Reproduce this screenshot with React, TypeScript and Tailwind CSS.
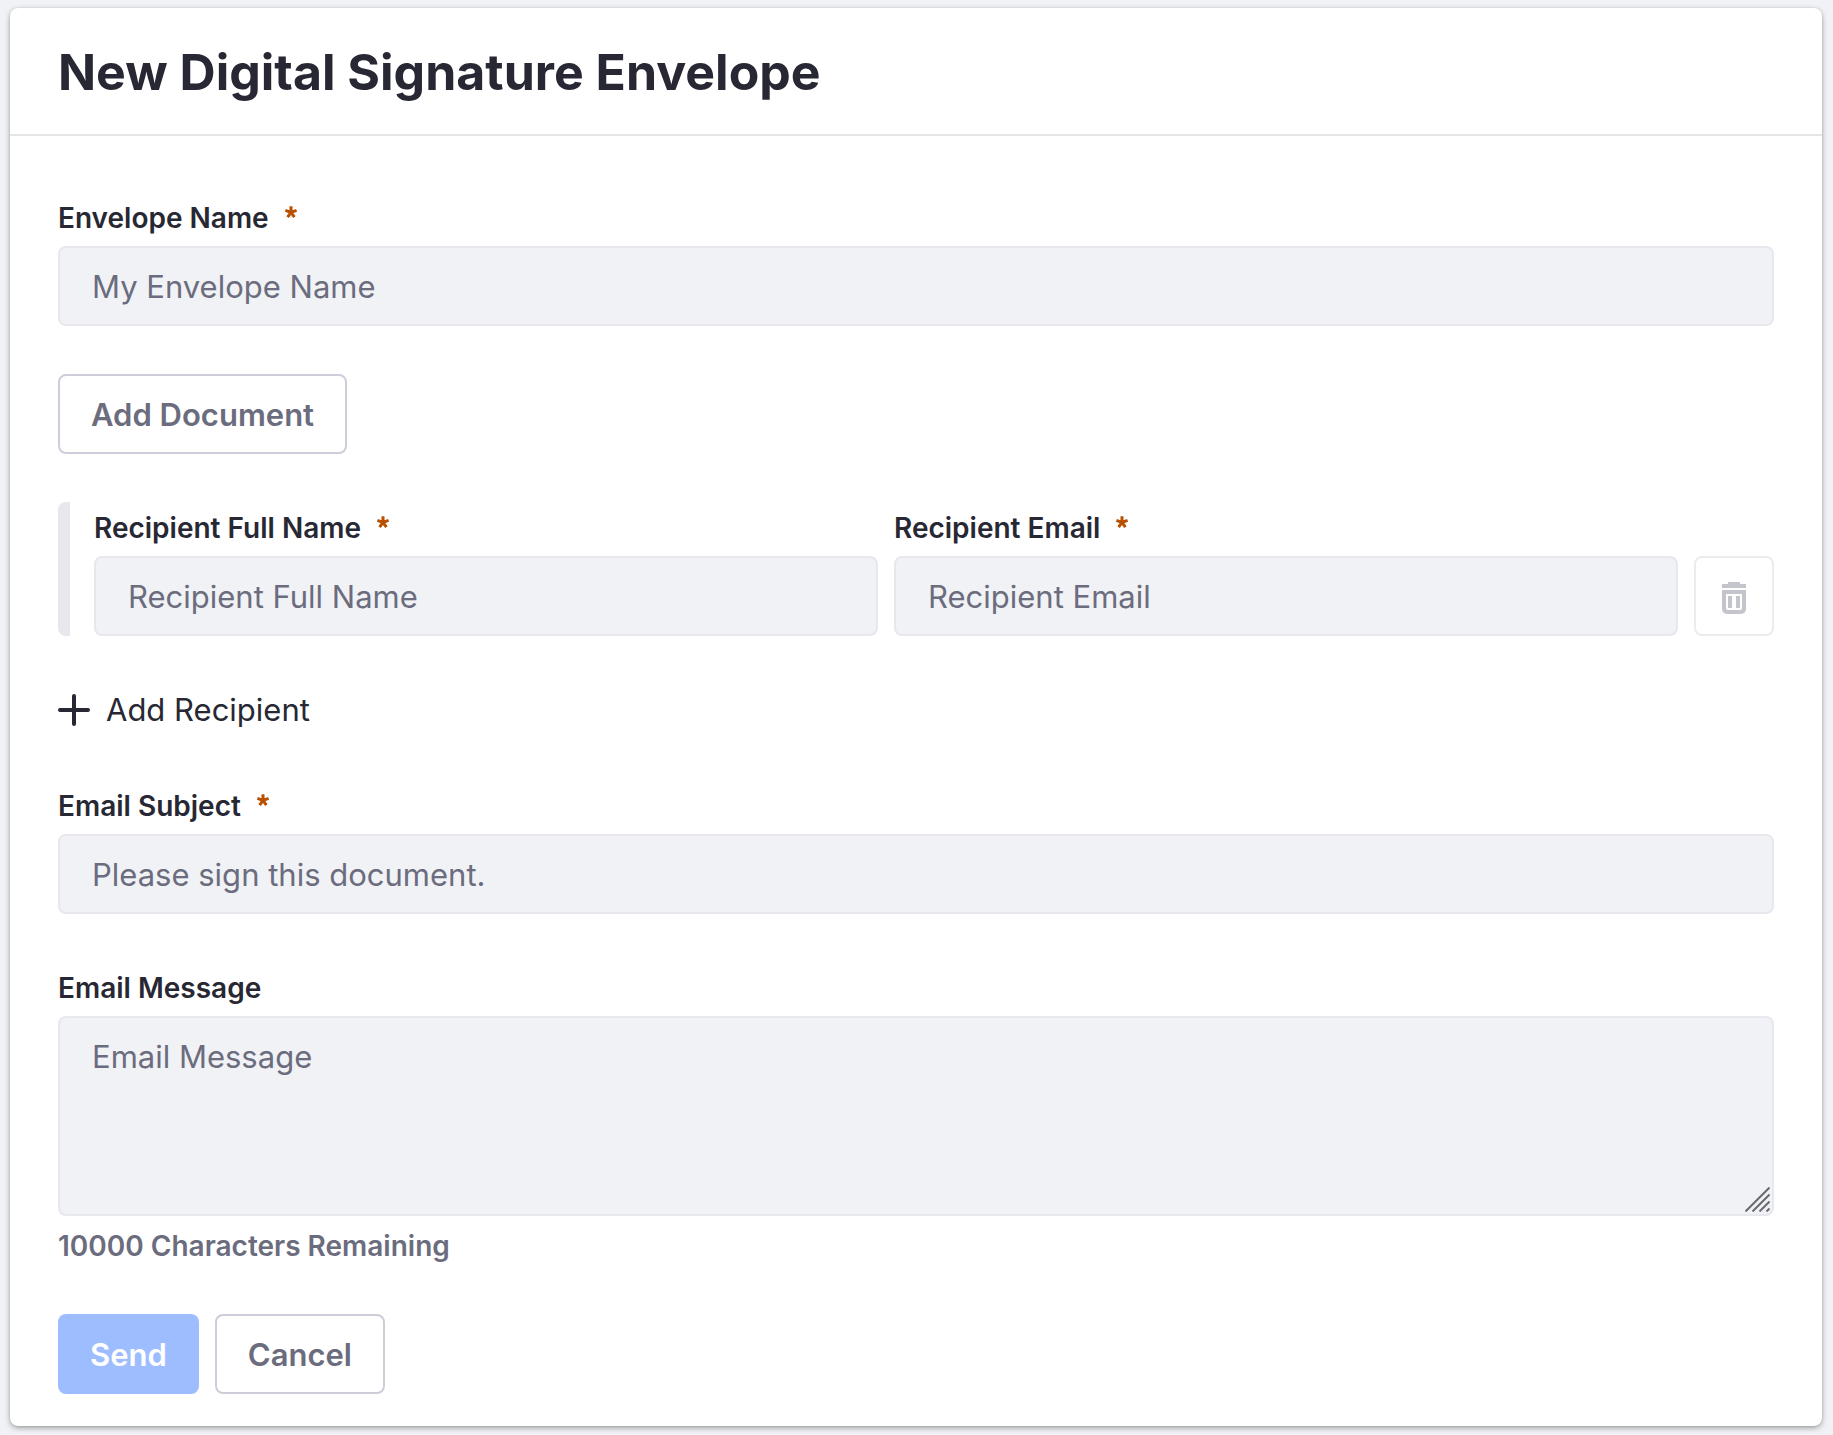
import { useState } from 'react';
import type { ReactNode } from 'react';

const MAX_MESSAGE_LENGTH = 10000;

const fieldClass =
  'block w-full rounded-lg border-2 border-[#e7e7ed] bg-[#f1f2f5] px-8 text-[31px] leading-10 text-[#272833] placeholder:text-[#6b6c7e] placeholder:opacity-100 outline-none focus:border-[#80acff]';

const secondaryButtonClass =
  'h-20 rounded-lg border-2 border-[#cdced9] bg-white px-[31px] pt-[2px] text-[31px] leading-10 font-semibold text-[#6b6c7e]';

function Asterisk() {
  return (
    <svg className="mb-3 h-3 w-3 overflow-visible text-[#b95000]" viewBox="0 0 12 12" fill="none" stroke="currentColor" strokeWidth="3" aria-hidden="true">
      <path d="M6 6.3V0.2M6 6.3L0.4 4.3M6 6.3L11.6 4.3M6 6.3L2.6 11.2M6 6.3L9.4 11.2" />
    </svg>
  );
}

function TrashIcon() {
  return (
    <svg className="h-8 w-6" viewBox="0 0 24 32" fill="currentColor" aria-hidden="true">
      <path d="M6 0h12v2h6v4H0V2h6z" />
      <path fillRule="evenodd" d="M0 8h24v19a5 5 0 0 1-5 5H5a5 5 0 0 1-5-5zM4 12v14a2 2 0 0 0 2 2h12a2 2 0 0 0 2-2V12z" />
      <path d="M6 14h4v12H6zM14 14h4v12h-4z" />
    </svg>
  );
}

function PlusIcon() {
  return (
    <svg className="h-8 w-8" viewBox="0 0 32 32" fill="none" stroke="currentColor" strokeWidth="4" strokeLinecap="round" aria-hidden="true">
      <path d="M16 2v28M2 16h28" />
    </svg>
  );
}

function ResizeGrip() {
  return (
    <svg className="pointer-events-none absolute right-1 bottom-1 h-[25px] w-[25px] text-[#6a6a6e]" viewBox="0 0 25 25" stroke="currentColor" strokeWidth="2" aria-hidden="true">
      <path d="M0.5 24.5L24.5 0.5M7.5 24.5L24.5 7.5M14.5 24.5L24.5 14.5M21.5 24.5L24.5 21.5" />
    </svg>
  );
}

type FieldProps = { id: string; label: string; required?: boolean; children: ReactNode };

function Field({ id, label, required, children }: FieldProps) {
  return (
    <div className="min-w-0 flex-1">
      <label htmlFor={id} className="mb-2 flex items-center gap-4 text-[28px] leading-10 font-semibold">
        {label}
        {required && <Asterisk />}
      </label>
      {children}
    </div>
  );
}

export default function App() {
  const [message, setMessage] = useState('');

  return (
    <div className="min-h-screen bg-[#f1f2f5] pt-2 pr-[11px] pb-[9px] pl-[10px] font-['Inter',sans-serif] text-[#272833]">
      <main className="rounded-lg bg-white shadow-[0_2px_6px_-1px_rgba(0,0,0,0.45),0_0_2px_rgba(0,0,0,0.12)]">
        <header className="border-b-2 border-[#e5e5e7] px-12 pt-8 pb-[30px]">
          <h1 className="text-[50px] leading-16 font-bold">New Digital Signature Envelope</h1>
        </header>

        <form className="px-12 pt-[62px] pb-8" onSubmit={(event) => event.preventDefault()}>
          <Field id="envelope-name" label="Envelope Name" required>
            <input id="envelope-name" type="text" placeholder="My Envelope Name" className={`${fieldClass} h-20`} />
          </Field>

          <button type="button" className={`${secondaryButtonClass} mt-12 block`}>
            Add Document
          </button>

          <div className="mt-12 flex">
            <div className="w-3 shrink-0 rounded-l-lg bg-[#e7e7ed]" />
            <div className="flex flex-1 items-end gap-4 pt-[6px] pl-6">
              <Field id="recipient-name" label="Recipient Full Name" required>
                <input id="recipient-name" type="text" placeholder="Recipient Full Name" className={`${fieldClass} h-20`} />
              </Field>
              <Field id="recipient-email" label="Recipient Email" required>
                <input id="recipient-email" type="email" placeholder="Recipient Email" className={`${fieldClass} h-20`} />
              </Field>
              <button
                type="button"
                disabled
                aria-label="Remove recipient"
                className="flex h-20 w-20 shrink-0 items-center justify-center rounded-lg border-2 border-[#ebebf0] bg-white pt-1 text-[#c4c4cc]"
              >
                <TrashIcon />
              </button>
            </div>
          </div>

          <button type="button" className="mt-[54px] flex items-center gap-4 text-[31px] leading-10">
            <PlusIcon />
            Add Recipient
          </button>

          <div className="mt-14">
            <Field id="email-subject" label="Email Subject" required>
              <input id="email-subject" type="text" placeholder="Please sign this document." className={`${fieldClass} h-20`} />
            </Field>
          </div>

          <div className="mt-[54px]">
            <Field id="email-message" label="Email Message">
              <div className="relative">
                <textarea
                  id="email-message"
                  placeholder="Email Message"
                  maxLength={MAX_MESSAGE_LENGTH}
                  value={message}
                  onChange={(event) => setMessage(event.target.value)}
                  className={`${fieldClass} h-50 resize-none py-[19px]`}
                />
                <ResizeGrip />
              </div>
            </Field>
            <p className="mt-[10px] text-[28px] leading-10 font-semibold text-[#6b6c7e]">
              {MAX_MESSAGE_LENGTH - message.length} Characters Remaining
            </p>
          </div>

          <div className="mt-12 flex gap-4">
            <button type="submit" disabled className="h-20 rounded-lg bg-[#9dbdff] px-8 pt-[2px] text-[31px] leading-10 font-semibold text-white">
              Send
            </button>
            <button type="button" className={secondaryButtonClass}>
              Cancel
            </button>
          </div>
        </form>
      </main>
    </div>
  );
}
